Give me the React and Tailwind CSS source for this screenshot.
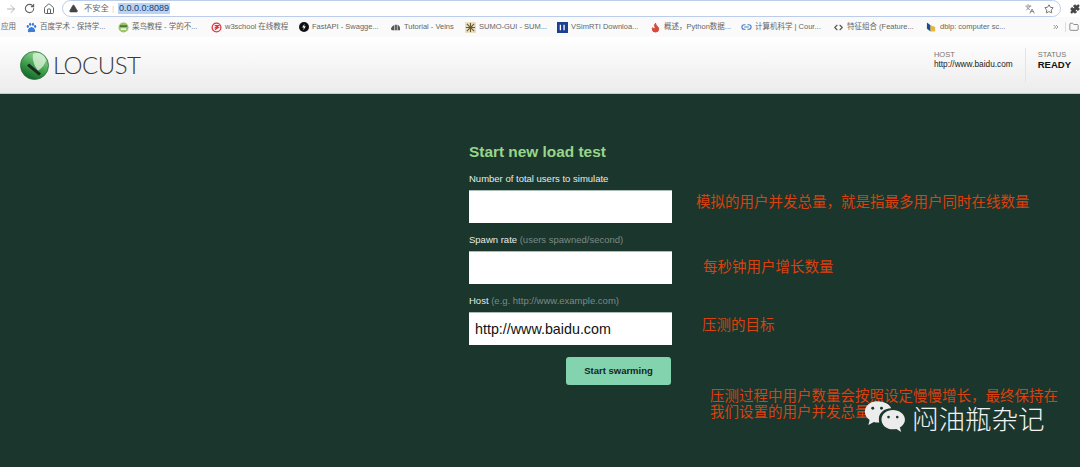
import { ArrowRight, RotateCw, Home, TriangleAlert, Star, Puzzle, Languages, ChevronsRight, Folder, Link2, Code, Flame } from 'lucide-react';

const FONT = "font-['Liberation_Sans','Noto_Sans_CJK_SC',sans-serif]";

// favicons in the bookmarks bar
const Baidu = () => (
  <svg width="11" height="11" viewBox="0 0 12 12" fill="#3b7ddb">
    <ellipse cx="2" cy="5" rx="1.2" ry="1.6" /><ellipse cx="4.5" cy="2.4" rx="1.2" ry="1.7" />
    <ellipse cx="7.6" cy="2.4" rx="1.2" ry="1.7" /><ellipse cx="10" cy="5" rx="1.2" ry="1.6" />
    <path d="M6 5.5c-2 0-4 2.5-4 4.2C2 11 3.4 11.4 6 11s4 0 4-1.3C10 8 8 5.5 6 5.5z" />
  </svg>
);
const Runoob = () => (
  <svg width="11" height="11" viewBox="0 0 12 12">
    <circle cx="6" cy="6" r="5.5" fill="#9bc36b" /><rect x="2" y="3.5" width="8" height="2" fill="#4d7a35" /><rect x="3" y="7" width="6" height="1.5" fill="#fff" />
  </svg>
);
const W3 = () => (
  <svg width="11" height="11" viewBox="0 0 12 12" fill="none" stroke="#d9363e" strokeWidth="1.4">
    <circle cx="6" cy="6" r="4.8" /><path d="M4 4h4L5 6.2h2.6L4.2 8.4" />
  </svg>
);
const FastApi = () => (
  <svg width="10" height="10" viewBox="0 0 12 12">
    <circle cx="6" cy="6" r="6" fill="#111" /><path d="M6.600 2 3.800 6.600h2L5.200 10 8.200 5.200h-2z" fill="#fff" />
  </svg>
);
const Veins = () => (
  <svg width="11" height="9" viewBox="0 0 12 10" fill="#555">
    <path d="M1 7c0-3 3-5 6-5s4 2 4 4v2H2z" /><path d="M5 2v6M8 2v6" stroke="#fff" strokeWidth=".7" />
  </svg>
);
const Sumo = () => (
  <svg width="11" height="11" viewBox="0 0 12 12">
    <rect width="12" height="12" fill="#e8e0c4" /><path d="M6 1v10M1 6h10M2 2l8 8M10 2l-8 8" stroke="#6a5a2a" strokeWidth="1.2" />
  </svg>
);
const Vsim = () => (
  <svg width="11" height="11" viewBox="0 0 12 12">
    <rect width="12" height="12" fill="#1c3f94" /><rect x="3" y="3" width="1.400" height="6" fill="#fff" /><rect x="7" y="3" width="1.400" height="6" fill="#fff" />
  </svg>
);
const Dblp = () => (
  <svg width="11" height="12" viewBox="0 0 12 12">
    <path d="M1 1l4 3v7L1 8z" fill="#1c4f8f" /><path d="M5 4l5 2v5H5z" fill="#e8b73a" />
  </svg>
);

const BOOKMARKS = [
  { icon: <Baidu />, label: '百度学术 - 保持学...', w: 'w-[92px]' },
  { icon: <Runoob />, label: '菜鸟教程 - 学的不...', w: 'w-[93px]' },
  { icon: <W3 />, label: 'w3school 在线教程', w: 'w-[87px]' },
  { icon: <FastApi />, label: 'FastAPI - Swagge...', w: 'w-[92px]' },
  { icon: <Veins />, label: 'Tutorial - Veins', w: 'w-[75px]' },
  { icon: <Sumo />, label: 'SUMO-GUI - SUM...', w: 'w-[92px]' },
  { icon: <Vsim />, label: 'VSimRTI Downloa...', w: 'w-[93px]' },
  { icon: <Flame size={11} color="#d9483b" fill="#d9483b" />, label: '概述，Python数据...', w: 'w-[91px]' },
  { icon: <Link2 size={12} color="#4a7fc9" strokeWidth={2.5} />, label: '计算机科学 | Cour...', w: 'w-[92px]' },
  { icon: <Code size={9} color="#555" strokeWidth={3} />, label: '特征组合 (Feature...', w: 'w-[93px]' },
  { icon: <Dblp />, label: 'dblp: computer sc...', w: 'w-[90px]' },
];

function Chrome() {
  return (
    <div className="bg-white">
      <div className="flex items-center h-[17px] pl-[5px] text-[#5f6368]">
        <ArrowRight size={12} color="#b5b5b5" />
        <RotateCw size={11} className="ml-[7px]" strokeWidth={2.4} />
        <Home size={12} className="ml-[8px]" />
        <div className="flex items-center flex-1 h-[17px] ml-[7px] mr-[9px] pl-[6px] pr-[6px] border border-[#bccdec] rounded-full">
          <TriangleAlert size={9} color="#444" fill="#444" />
          <span className="ml-[6px] text-[8.3px] text-[#666]">不安全</span>
          <span className="ml-[3px] text-[8px] text-[#ccc]">|</span>
          <span className="ml-[4px] text-[9px] leading-[11px] text-[#1a3a6e] bg-[#b9d3f3] px-[1px]">0.0.0.0:8089</span>
          <Languages size={10} color="#777" className="ml-auto" />
          <Star size={10} color="#555" className="ml-[9px]" />
        </div>
        <Puzzle size={10} color="#444" fill="#444" />
      </div>
      <div className="flex items-center h-[20px] bg-[#fafafa] text-[7.5px] text-[#666] whitespace-nowrap">
        <span className="w-[26px] pl-[1px]">应用</span>
        {BOOKMARKS.map((b) => (
          <div key={b.label} className={`flex items-center gap-[3px] ${b.w}`}>
            <span className="flex justify-center w-[11px]">{b.icon}</span>
            <span>{b.label}</span>
          </div>
        ))}
        <ChevronsRight size={8} color="#666" className="ml-[36px]" />
        <span className="w-px h-[10px] ml-[5px] bg-[#ddd]" />
        <Folder size={10} color="#777" className="ml-[3px]" />
      </div>
    </div>
  );
}

function Logo() {
  return (
    <svg width="29" height="29" viewBox="0 0 29 29">
      <defs>
        <linearGradient id="orb" x1="0.75" y1="0" x2="0.25" y2="1">
          <stop offset="0" stopColor="#a4dfa8" />
          <stop offset="0.55" stopColor="#3fa04a" />
          <stop offset="1" stopColor="#0c5f26" />
        </linearGradient>
      </defs>
      <circle cx="14.5" cy="14.5" r="14" fill="url(#orb)" stroke="#2c6a3c" strokeWidth=".8" />
      <path d="M13 3c5-2.500 11 0 13 6-1 5-5 9-8 10.500-3-3-6-10-5-16.500z" fill="#e2f4de" opacity=".75" />
      <path d="M9 12.500l12 10-2 2.200-12-10z" fill="#1c2a22" />
    </svg>
  );
}

function Header() {
  return (
    <header className="flex items-center justify-between h-[57px] pl-[20px] pr-[9px] bg-gradient-to-b from-white to-[#ececec] border-b border-[#c9c9c9]">
      <div className="flex items-center gap-[4px]">
        <Logo />
        <span className="text-[24px] font-light tracking-[-0.5px] text-[#3a3a3a] font-['Lato',sans-serif]">LOCUST</span>
      </div>
      <div className="flex items-stretch h-[34px]">
        <div className="pr-[12px] border-r border-[#e4e4e4] pt-[3px]">
          <div className="text-[7.5px] leading-[8px] text-[#777]">HOST</div>
          <div className="text-[8.3px] leading-[11px] text-[#222]">http://www.baidu.com</div>
        </div>
        <div className="pl-[12px] pt-[3px]">
          <div className="text-[7.5px] leading-[8px] text-[#777]">STATUS</div>
          <div className="text-[9.5px] leading-[11px] font-bold text-[#111]">READY</div>
        </div>
      </div>
    </header>
  );
}

function Field({ label, hint, value }) {
  return (
    <div>
      <label className="block h-[13px] text-[9.5px] leading-[13px] text-[#e4ece6]">
        {label}
        {hint && <span className="text-[#7a8b85]"> {hint}</span>}
      </label>
      <input
        readOnly
        value={value || ''}
        className="block w-[203px] h-[33px] mt-[5px] px-[6px] bg-white border-t border-[#a9bdb6] text-[14.3px] text-[#111] outline-none"
      />
    </div>
  );
}

const NOTE = "absolute text-[#d8420f] text-[14.5px] leading-[16px] whitespace-nowrap";

export default function App() {
  return (
    <div className={`flex flex-col w-[1080px] h-[467px] overflow-hidden bg-[#1b362d] ${FONT}`}>
      <Chrome />
      <Header />
      <main className="relative flex-1 pl-[469px]">
        <h2 className="mt-[49px] text-[15.4px] leading-[18px] font-bold text-[#98d58a]">Start new load test</h2>
        <div className="flex flex-col gap-[10px] mt-[11px] w-[203px]">
          <Field label="Number of total users to simulate" />
          <Field label="Spawn rate" hint="(users spawned/second)" />
          <Field label="Host" hint="(e.g. http://www.example.com)" value="http://www.baidu.com" />
        </div>
        <div className="flex justify-end w-[202px] mt-[12px]">
          <button className="w-[105px] h-[28px] rounded-[3px] bg-[#83d3ae] text-[9.5px] font-bold text-[#16261f]">Start swarming</button>
        </div>

        <p className={`${NOTE} left-[696px] top-[100px]`}>模拟的用户并发总量，就是指最多用户同时在线数量</p>
        <p className={`${NOTE} left-[703px] top-[165px]`}>每秒钟用户增长数量</p>
        <p className={`${NOTE} left-[702px] top-[223px]`}>压测的目标</p>
        <p className={`${NOTE} left-[710px] top-[294px]`}>
          压测过程中用户数量会按照设定慢慢增长，最终保持在
          <br />
          我们设置的用户并发总量
        </p>

        <div className="absolute left-[864px] top-[306px] flex items-center gap-[6px]">
          <svg width="42" height="35" viewBox="0 0 48 37" fill="#ececec">
            <path d="M15 0C7 0 1 5.400 1 12c0 4 2.200 7.200 5.400 9.400L5 27l6.300-3.300c1.500.4 3 .6 4.700.6.500 0 1 0 1.400-.1C17 22.800 17 21.500 17 20c0-6.600 6-11.800 14-12C29.500 3.400 23 0 15 0z" />
            <circle cx="10" cy="8" r="1.700" fill="#1b362d" /><circle cx="20" cy="8" r="1.700" fill="#1b362d" />
            <path d="M33 10c-7 0-13 4.600-13 11s6 11 13 11c1.400 0 2.700-.2 4-.5L42.500 35 41 29.800c3.500-2 5.800-5.200 5.800-8.800C46.800 14.600 40 10 33 10z" />
            <circle cx="28" cy="18" r="1.500" fill="#1b362d" /><circle cx="38" cy="18" r="1.500" fill="#1b362d" />
          </svg>
          <span className="text-[26.5px] leading-[30px] text-[#f2f2f2] font-light font-['Noto_Sans_CJK_SC',sans-serif]">闷油瓶杂记</span>
        </div>
      </main>
    </div>
  );
}
